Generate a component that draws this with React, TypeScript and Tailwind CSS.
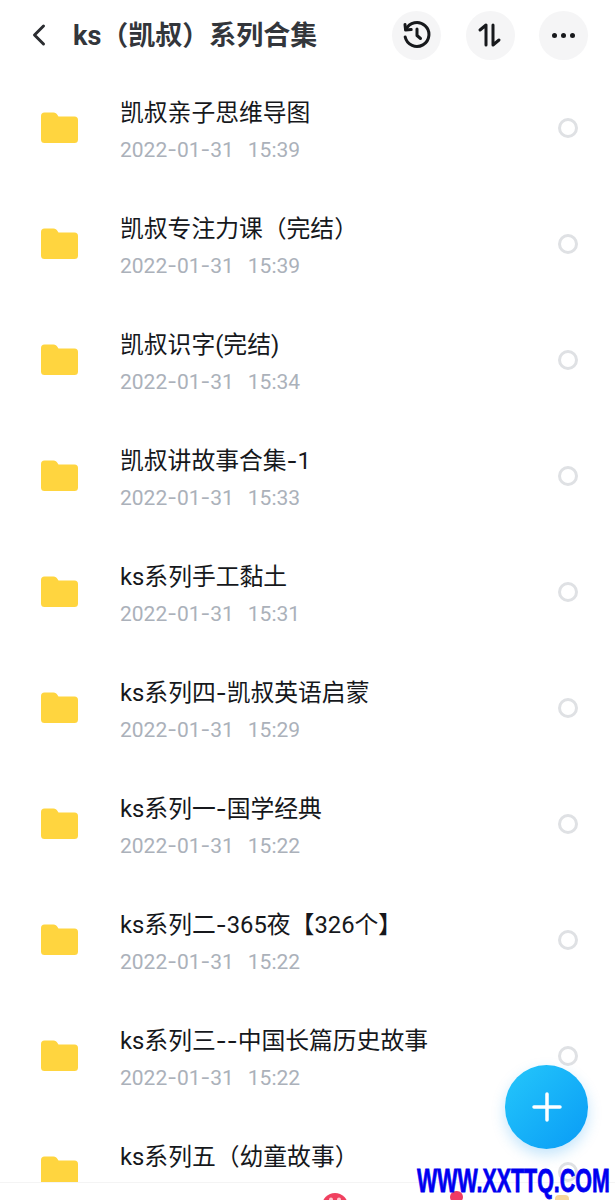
const files = [
  { name: '凯叔亲子思维导图', time: '15:39' },
  { name: '凯叔专注力课（完结）', time: '15:39' },
  { name: '凯叔识字(完结)', time: '15:34' },
  { name: '凯叔讲故事合集-1', time: '15:33' },
  { name: 'ks系列手工黏土', time: '15:31' },
  { name: 'ks系列四-凯叔英语启蒙', time: '15:29' },
  { name: 'ks系列一-国学经典', time: '15:22' },
  { name: 'ks系列二-365夜【326个】', time: '15:22' },
  { name: 'ks系列三--中国长篇历史故事', time: '15:22' },
  { name: 'ks系列五（幼童故事）', time: '15:22' },
]

// the hyphens in the app font are much wider than Roboto's
function Hyphens({ text }: { text: string }) {
  return (
    <>
      {text.split(/(-)/).map((part, i) =>
        part === '-' ? (
          <span key={i} className="font-['Inter']">-</span>
        ) : (
          <span key={i}>{part}</span>
        ),
      )}
    </>
  )
}

function FolderIcon() {
  return (
    <svg width="37" height="32" viewBox="0 0 37 32" className="shrink-0">
      <path
        d="M0 4a3.500 3.500 0 0 1 3.500-3.500h9c2 0 3 1 4 2.500l1 1.500h16a3.500 3.500 0 0 1 3.500 3.500v19.500a3.500 3.500 0 0 1-3.500 3.500h-30a3.500 3.500 0 0 1-3.500-3.500z"
        fill="#ffd53f"
      />
    </svg>
  )
}

function Row({ name, time }: { name: string; time: string }) {
  return (
    <div className="flex h-[116px] shrink-0 items-center pl-[41px] pr-[37px]">
      <FolderIcon />
      <div className="ml-[42px] flex-1 pt-[7px]">
        <div className="text-[23.800px] leading-[32px] text-[#16181c]">
          <Hyphens text={name} />
        </div>
        <div className="mt-[5px] flex gap-[14px] text-[21px] leading-[32px] text-[#abb1ba]">
          <span><Hyphens text="2022-01-31" /></span>
          <span>{time}</span>
        </div>
      </div>
      <div className="h-[20px] w-[20px] rounded-full border-[3px] border-[#dfe1e4]" />
    </div>
  )
}

export default function App() {
  return (
    <div className="relative flex h-[1200px] w-[615px] flex-col overflow-hidden bg-white font-['Roboto','Noto_Sans_CJK_SC',sans-serif]">
      <header className="flex h-[70px] shrink-0 items-center pl-[29px] pr-[27px]">
        <svg width="20" height="24" viewBox="0 0 20 24" fill="none" stroke="#2b2d31" strokeWidth="3" strokeLinecap="round" strokeLinejoin="round">
          <path d="M14.500 3 5.500 12l9 9" />
        </svg>
        <h1 className="ml-[24px] flex-1 pt-[2px] text-[27px] font-bold leading-none text-[#33363b]">ks（凯叔）系列合集</h1>
        <div className="flex gap-[24.500px]">
          <div className="flex h-[49px] w-[49px] items-center justify-center rounded-full bg-[#f5f5f6]">
            <svg width="30" height="30" viewBox="0 0 30 30" fill="none" stroke="#17191c" strokeWidth="3" strokeLinecap="round" strokeLinejoin="round">
              <path d="M4 9.500A12 12 0 1 1 3.200 17" />
              <path d="M3 4.500 3.600 10l5.600-.4" />
              <path d="M15 9v6.500l3.500 3" />
            </svg>
          </div>
          <div className="flex h-[49px] w-[49px] items-center justify-center rounded-full bg-[#f5f5f6]">
            <svg width="26" height="26" viewBox="0 0 26 26" fill="none" stroke="#17191c" strokeWidth="3" strokeLinecap="round" strokeLinejoin="round">
              <path d="M3 8 9 3v20" />
              <path d="M16 3v20l6-5" />
            </svg>
          </div>
          <div className="flex h-[49px] w-[49px] items-center justify-center gap-[4px] rounded-full bg-[#f5f5f6]">
            <span className="h-[5px] w-[5px] rounded-full bg-[#17191c]" />
            <span className="h-[5px] w-[5px] rounded-full bg-[#17191c]" />
            <span className="h-[5px] w-[5px] rounded-full bg-[#17191c]" />
          </div>
        </div>
      </header>

      <main className="flex flex-1 flex-col overflow-hidden">
        {files.map((f) => (
          <Row key={f.name} name={f.name} time={f.time} />
        ))}
      </main>

      {/* bottom tab bar, only its top edge is in frame */}
      <nav className="absolute bottom-0 left-0 h-[18px] w-full border-t border-[#f4f4f4] bg-white">
        <svg className="absolute left-[320px] top-[10px]" width="30" height="8" viewBox="0 0 30 8">
          <ellipse cx="15" cy="13" rx="13" ry="13" fill="#f0405f" />
          <circle cx="11" cy="6.500" r="2" fill="#ffc7d0" />
          <circle cx="19" cy="6.500" r="2" fill="#ffc7d0" />
        </svg>
        <span className="absolute left-[450px] top-[8px] h-[12px] w-[13px] rounded-full bg-[#ef3b64]" />
        <span className="absolute left-[555px] top-[12px] h-[8px] w-[14px] rounded-t-[4px] bg-[#f6d79a]" />
      </nav>

      <button className="absolute left-[505px] top-[1065px] flex h-[84px] w-[83px] items-center justify-center rounded-full bg-gradient-to-br from-[#25c7fb] to-[#0a9bf5] shadow-[0_6px_14px_rgba(20,150,240,0.25)]">
        <svg width="30" height="30" viewBox="0 0 30 30" stroke="#ffffff" strokeWidth="3.500" strokeLinecap="round">
          <path d="M15 2v26M2 15h26" />
        </svg>
      </button>

      <div className="absolute left-[417px] top-[1162px] w-[192px] text-[34px] font-bold leading-[36px] text-[#0000f0] font-['Liberation_Sans',sans-serif]">
        <span className="inline-block origin-left scale-x-[0.63] whitespace-nowrap [-webkit-text-stroke:0.8px_#0000f0]">WWW.XXTTQ.COM</span>
      </div>
    </div>
  )
}
